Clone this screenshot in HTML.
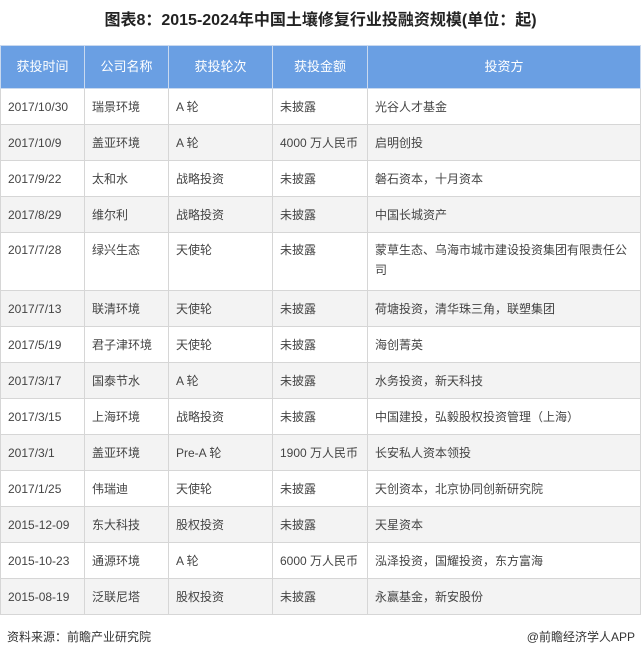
<!DOCTYPE html>
<html><head><meta charset="utf-8"><style>
body{margin:0;width:641px;height:659px;background:#fff;font-family:"Liberation Sans","Noto Sans CJK SC",sans-serif;overflow:hidden}
h1{margin:0;position:absolute;top:10px;left:0;width:641px;text-align:center;font-size:16px;font-weight:bold;color:#222;line-height:22px}
table{position:absolute;top:45px;left:0;border-collapse:collapse;width:641px;table-layout:fixed}
td,th{border:1px solid #d6d6d6;font-size:12px;color:#444;padding:0 4px 0 7px;text-align:left;height:35px;vertical-align:middle;font-weight:normal;line-height:20px}
th{background:#6a9fe3;color:#fff;height:42px;text-align:center;padding:0;font-size:13px;border-color:#c9d9ef}
tr:nth-child(odd) td{background:#f3f3f3}
tr.t td{height:50px;vertical-align:top;padding-top:7px}
.f{position:absolute;top:628px;font-size:12px;color:#333}
</style></head><body>
<h1>图表8：2015-2024年中国土壤修复行业投融资规模(单位：起)</h1>
<table>
<colgroup><col style="width:84px"><col style="width:84px"><col style="width:104px"><col style="width:95px"><col></colgroup>
<tr><th>获投时间</th><th>公司名称</th><th>获投轮次</th><th>获投金额</th><th>投资方</th></tr>
<tr><td>2017/10/30</td><td>瑞景环境</td><td>A 轮</td><td>未披露</td><td>光谷人才基金</td></tr>
<tr><td>2017/10/9</td><td>盖亚环境</td><td>A 轮</td><td>4000 万人民币</td><td>启明创投</td></tr>
<tr><td>2017/9/22</td><td>太和水</td><td>战略投资</td><td>未披露</td><td>磐石资本，十月资本</td></tr>
<tr><td>2017/8/29</td><td>维尔利</td><td>战略投资</td><td>未披露</td><td>中国长城资产</td></tr>
<tr class="t"><td>2017/7/28</td><td>绿兴生态</td><td>天使轮</td><td>未披露</td><td>蒙草生态、乌海市城市建设投资集团有限责任公<br>司</td></tr>
<tr><td>2017/7/13</td><td>联清环境</td><td>天使轮</td><td>未披露</td><td>荷塘投资，清华珠三角，联塑集团</td></tr>
<tr><td>2017/5/19</td><td>君子津环境</td><td>天使轮</td><td>未披露</td><td>海创菁英</td></tr>
<tr><td>2017/3/17</td><td>国泰节水</td><td>A 轮</td><td>未披露</td><td>水务投资，新天科技</td></tr>
<tr><td>2017/3/15</td><td>上海环境</td><td>战略投资</td><td>未披露</td><td>中国建投，弘毅股权投资管理（上海）</td></tr>
<tr><td>2017/3/1</td><td>盖亚环境</td><td>Pre-A 轮</td><td>1900 万人民币</td><td>长安私人资本领投</td></tr>
<tr><td>2017/1/25</td><td>伟瑞迪</td><td>天使轮</td><td>未披露</td><td>天创资本，北京协同创新研究院</td></tr>
<tr><td>2015-12-09</td><td>东大科技</td><td>股权投资</td><td>未披露</td><td>天星资本</td></tr>
<tr><td>2015-10-23</td><td>通源环境</td><td>A 轮</td><td>6000 万人民币</td><td>泓泽投资，国耀投资，东方富海</td></tr>
<tr><td>2015-08-19</td><td>泛联尼塔</td><td>股权投资</td><td>未披露</td><td>永赢基金，新安股份</td></tr>
</table>
<div class="f" style="left:7px">资料来源：前瞻产业研究院</div>
<div class="f" style="right:6px">@前瞻经济学人APP</div>
</body></html>
